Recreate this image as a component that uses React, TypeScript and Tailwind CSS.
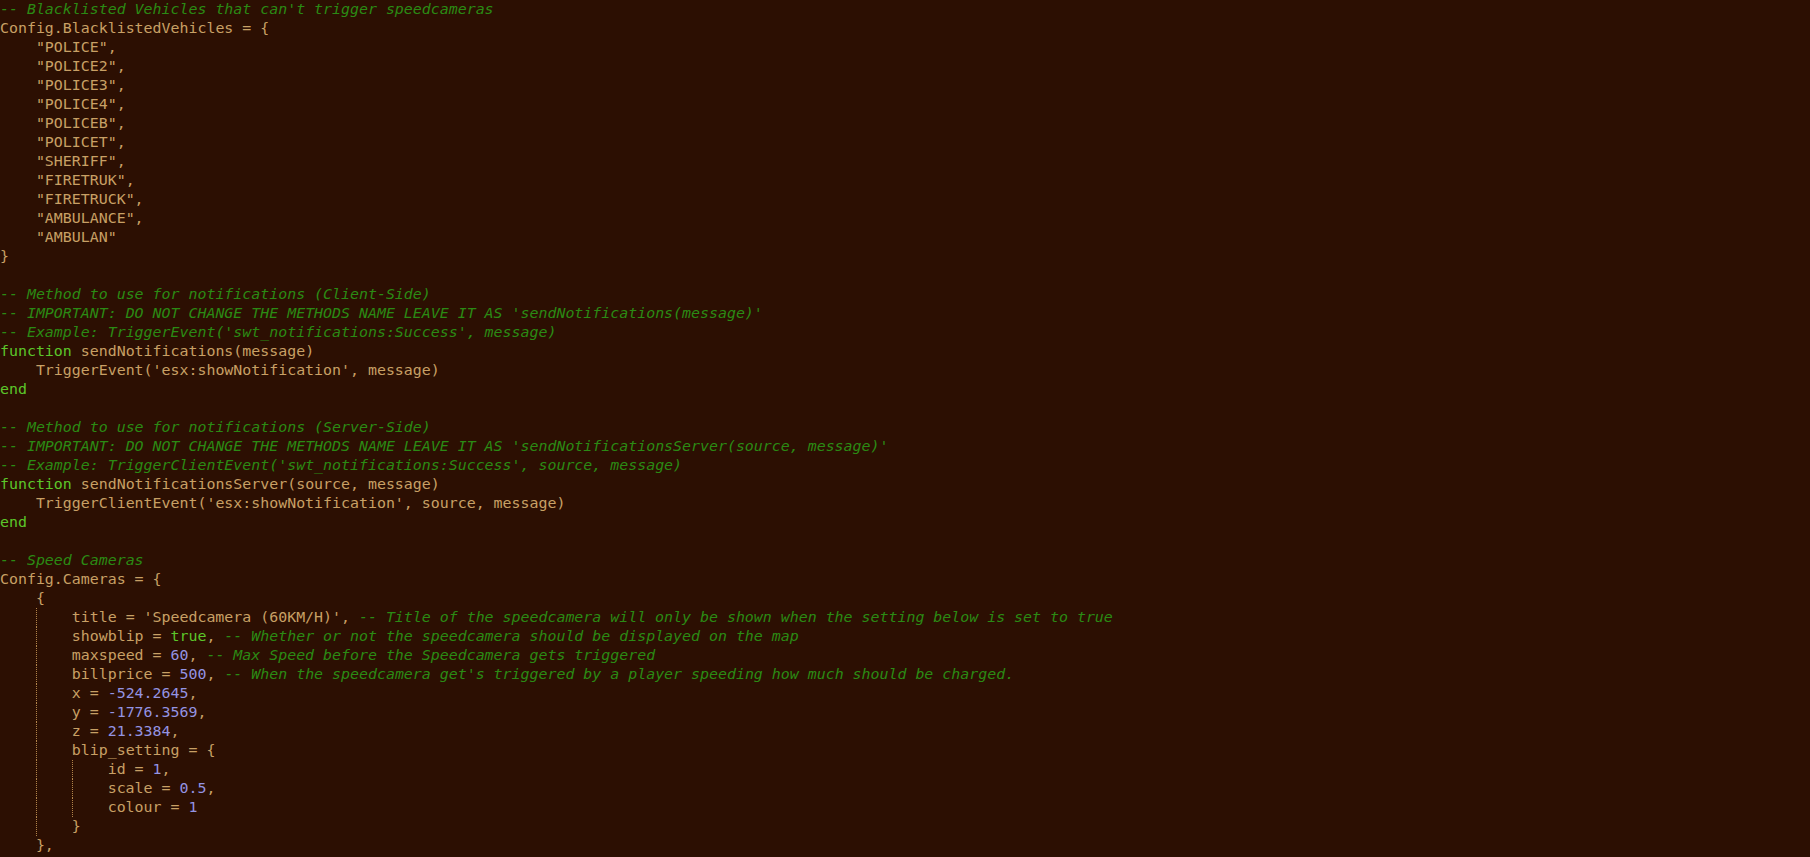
import React from "react";

type Tok = [string, "t" | "c" | "k" | "n"];
type Line = { ind?: number; guides?: number[]; toks: Tok[] };

const cls: Record<string, string> = {
  t: "text-[#c8a065]",
  c: "text-[#2b8a14] italic",
  k: "text-[#5cc62a]",
  n: "text-[#9494e2]",
};

const L = (ind: number, toks: Tok[], guides: number[] = []): Line => ({ ind, toks, guides });

const lines: Line[] = [
  L(0, [["-- Blacklisted Vehicles that can't trigger speedcameras", "c"]]),
  L(0, [["Config.BlacklistedVehicles = {", "t"]]),
  L(1, [['"POLICE",', "t"]]),
  L(1, [['"POLICE2",', "t"]]),
  L(1, [['"POLICE3",', "t"]]),
  L(1, [['"POLICE4",', "t"]]),
  L(1, [['"POLICEB",', "t"]]),
  L(1, [['"POLICET",', "t"]]),
  L(1, [['"SHERIFF",', "t"]]),
  L(1, [['"FIRETRUK",', "t"]]),
  L(1, [['"FIRETRUCK",', "t"]]),
  L(1, [['"AMBULANCE",', "t"]]),
  L(1, [['"AMBULAN"', "t"]]),
  L(0, [["}", "t"]]),
  L(0, []),
  L(0, [["-- Method to use for notifications (Client-Side)", "c"]]),
  L(0, [["-- IMPORTANT: DO NOT CHANGE THE METHODS NAME LEAVE IT AS 'sendNotifications(message)'", "c"]]),
  L(0, [["-- Example: TriggerEvent('swt_notifications:Success', message)", "c"]]),
  L(0, [["function", "k"], [" sendNotifications(message)", "t"]]),
  L(1, [["TriggerEvent('esx:showNotification', message)", "t"]]),
  L(0, [["end", "k"]]),
  L(0, []),
  L(0, [["-- Method to use for notifications (Server-Side)", "c"]]),
  L(0, [["-- IMPORTANT: DO NOT CHANGE THE METHODS NAME LEAVE IT AS 'sendNotificationsServer(source, message)'", "c"]]),
  L(0, [["-- Example: TriggerClientEvent('swt_notifications:Success', source, message)", "c"]]),
  L(0, [["function", "k"], [" sendNotificationsServer(source, message)", "t"]]),
  L(1, [["TriggerClientEvent('esx:showNotification', source, message)", "t"]]),
  L(0, [["end", "k"]]),
  L(0, []),
  L(0, [["-- Speed Cameras", "c"]]),
  L(0, [["Config.Cameras = {", "t"]]),
  L(1, [["{", "t"]]),
  L(2, [["title = 'Speedcamera (60KM/H)', ", "t"], ["-- Title of the speedcamera will only be shown when the setting below is set to true", "c"]], [1]),
  L(2, [["showblip = ", "t"], ["true", "k"], [", ", "t"], ["-- Whether or not the speedcamera should be displayed on the map", "c"]], [1]),
  L(2, [["maxspeed = ", "t"], ["60", "n"], [", ", "t"], ["-- Max Speed before the Speedcamera gets triggered", "c"]], [1]),
  L(2, [["billprice = ", "t"], ["500", "n"], [", ", "t"], ["-- When the speedcamera get's triggered by a player speeding how much should be charged.", "c"]], [1]),
  L(2, [["x = ", "t"], ["-524.2645", "n"], [",", "t"]], [1]),
  L(2, [["y = ", "t"], ["-1776.3569", "n"], [",", "t"]], [1]),
  L(2, [["z = ", "t"], ["21.3384", "n"], [",", "t"]], [1]),
  L(2, [["blip_setting = {", "t"]], [1]),
  L(3, [["id = ", "t"], ["1", "n"], [",", "t"]], [1, 2]),
  L(3, [["scale = ", "t"], ["0.5", "n"], [",", "t"]], [1, 2]),
  L(3, [["colour = ", "t"], ["1", "n"]], [1, 2]),
  L(2, [["}", "t"]], [1]),
  L(1, [["},", "t"]]),
];

export default function App() {
  return (
    <div
      className="w-[1810px] h-[857px] overflow-hidden bg-[#2c0f02] text-[14.92px] leading-[19px]"
      style={{ fontFamily: '"DejaVu Sans Mono", "Liberation Mono", monospace' }}
    >
      {lines.map((ln, i) => (
        <div key={i} className="flex h-[19px] whitespace-pre">
          {Array.from({ length: ln.ind ?? 0 }).map((_, j) => (
            <span
              key={j}
              className={
                "inline-block w-[4ch] h-[19px] shrink-0 " +
                (ln.guides && ln.guides.includes(j) ? "border-l border-dotted border-[#b3844a]" : "")
              }
            />
          ))}
          {ln.toks.map(([txt, k], j) => (
            <span key={j} className={cls[k]}>
              {txt}
            </span>
          ))}
        </div>
      ))}
    </div>
  );
}
